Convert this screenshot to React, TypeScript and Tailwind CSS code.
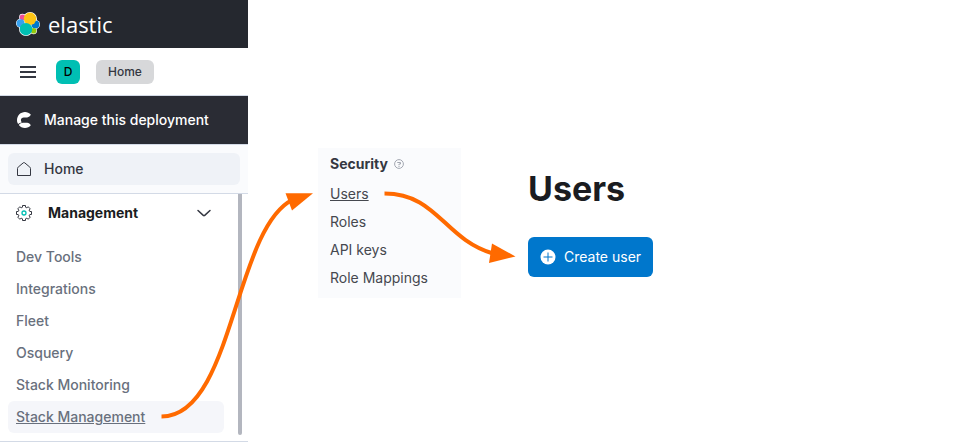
import React from "react";

const managementLinks = [
  "Dev Tools",
  "Integrations",
  "Fleet",
  "Osquery",
  "Stack Monitoring",
  "Stack Management",
];

const securityLinks = ["Users", "Roles", "API keys", "Role Mappings"];

function ElasticLogo() {
  return (
    <svg className="size-6" viewBox="0 0 24 24" aria-hidden="true">
      <circle cx="6.500" cy="5.200" r="3.400" fill="#fff" />
      <circle cx="4.600" cy="11.300" r="4.600" fill="#fff" />
      <circle cx="19.400" cy="12.600" r="4.600" fill="#fff" />
      <circle cx="17.600" cy="18.800" r="3.400" fill="#fff" />
      <circle cx="14" cy="7" r="7" fill="#fff" />
      <circle cx="10" cy="17" r="7" fill="#fff" />
      <circle cx="6.500" cy="5.200" r="2.800" fill="#f04e98" />
      <circle cx="4.600" cy="11.300" r="4" fill="#36a2ef" />
      <circle cx="19.400" cy="12.600" r="4" fill="#0077cc" />
      <circle cx="17.600" cy="18.800" r="2.800" fill="#93c90e" />
      <circle cx="14" cy="6.800" r="6.200" fill="#fec514" />
      <circle cx="10" cy="17.200" r="6.200" fill="#00bfb3" />
    </svg>
  );
}

function CloudLogo() {
  return (
    <svg className="size-4" viewBox="0 0 16 16" fill="#fff" aria-hidden="true">
      <path d="M14.800 2.600C13.300.9 11.200 0 9 0 4.600 0 1 3.600 1 8c0 1.600.4 2.800 1.100 4 1-.9 2.300-1.500 3.700-1.600C5.200 9.700 4.900 9 4.900 8.100c0-1.600 1.200-2.700 2.900-2.700h3.400c1.600 0 3-1.100 3.600-2.800Z" />
      <path d="M2.800 13.100C4.200 14.900 6.400 16 9 16c2.300 0 4.400-1 5.800-2.700-.7-1.700-2-2.600-3.600-2.600H7c-1.600 0-3.100.8-4.200 2.400Z" />
    </svg>
  );
}

function HomeIcon() {
  return (
    <svg className="size-4" viewBox="0 0 16 16" fill="none" stroke="#343741" aria-hidden="true">
      <path d="M1.500 7.500c0-.6.200-1 .7-1.400L7.300 1.800c.5-.4.900-.4 1.400 0l5.100 4.300c.5.400.7.800.7 1.400v7h-13z" strokeLinejoin="round" />
    </svg>
  );
}

function GearIcon() {
  return (
    <svg className="size-4" viewBox="0 0 16 16" fill="none" aria-hidden="true">
      <path
        d="M6.500.5h3v1.700l1.400.7 1.200-1.200 2.200 2.200-1.200 1.200.7 1.400h1.700v3h-1.700l-.7 1.400 1.200 1.200-2.200 2.200-1.200-1.200-1.400.7v1.700h-3v-1.700l-1.400-.7-1.200 1.200-2.200-2.200 1.200-1.200-.7-1.400H.5v-3h1.700l.7-1.400-1.200-1.200 2.200-2.200 1.200 1.200 1.400-.7z"
        stroke="#343741"
        strokeLinejoin="round"
      />
      <circle cx="8" cy="8" r="2" stroke="#00bfb3" strokeWidth="1.300" />
    </svg>
  );
}

function FlowArrows() {
  return (
    <svg
      className="pointer-events-none absolute top-0 left-0"
      width="540"
      height="445"
      viewBox="0 0 540 445"
      fill="none"
      aria-hidden="true"
    >
      <g stroke="#ff6a00" strokeWidth="4">
        <path d="M161.500 416.500C233 416.500 234 230 292 200" />
        <path d="M384.500 193.500C437 193.500 444 239 493 253.500" />
      </g>
      <g fill="#ff6a00">
        <path d="M285.500 193.300 313 193.300 292 210.500Z" />
        <path d="M492 243.500 515.500 256.500 489 263Z" />
      </g>
    </svg>
  );
}

function Sidebar() {
  return (
    <aside className="flex w-[248px] shrink-0 flex-col border-b border-[#d3dae6]">
      <div className="flex h-12 items-center gap-2 bg-[#25282f] px-4">
        <ElasticLogo />
        <span className="font-['Open_Sans','Noto_Sans',sans-serif] text-[22px] leading-6 text-white">
          elastic
        </span>
      </div>

      <div className="flex h-12 items-center gap-4 border-b border-[#d3dae6] px-4">
        <button type="button" aria-label="Toggle navigation" className="flex w-6 flex-col items-center gap-[3px]">
          <span className="h-0.5 w-4 bg-[#343741]" />
          <span className="h-0.5 w-4 bg-[#343741]" />
          <span className="h-0.5 w-4 bg-[#343741]" />
        </button>
        <button type="button" className="size-6 rounded-md bg-[#00bfb3] text-xs font-medium text-black">
          D
        </button>
        <a href="#home" className="flex h-6 items-center rounded-md bg-[#d7d8da] px-3 text-xs font-medium">
          Home
        </a>
      </div>

      <a href="#deployment" className="flex h-12 items-center gap-3 bg-[#2a2c34] px-4 font-medium text-white">
        <CloudLogo />
        Manage this deployment
      </a>

      <nav aria-label="Main">
        <div className="border-y border-[#d3dae6] bg-[#fafbfd] p-2">
          <a href="#home" className="flex h-8 items-center gap-3 rounded-md bg-[#eff2f7] px-2 font-medium">
            <HomeIcon />
            Home
          </a>
        </div>
        <div className="flex justify-between pr-[6px]">
          <div className="w-[224px] pb-2 pl-2">
            <button
              type="button"
              aria-expanded="true"
              className="flex h-[38px] w-full items-center gap-4 pr-3 pl-2 text-left font-bold text-[#1a1c21]"
            >
              <GearIcon />
              <span className="flex-1">Management</span>
              <svg className="size-4" viewBox="0 0 16 16" fill="none" stroke="#343741" strokeWidth="1.500" aria-hidden="true">
                <path d="m2 5.500 5.300 4.900c.5.400.9.400 1.400 0L14 5.500" strokeLinecap="round" strokeLinejoin="round" />
              </svg>
            </button>
            <ul className="pt-[9px]">
              {managementLinks.map((label) => (
                <li key={label}>
                  <a
                    href="#management"
                    className={
                      label === "Stack Management"
                        ? "flex h-8 items-center rounded-md bg-[#f5f6fa] px-2 font-medium text-[#69707d] underline"
                        : "flex h-8 items-center px-2 font-medium text-[#69707d]"
                    }
                  >
                    {label}
                  </a>
                </li>
              ))}
            </ul>
          </div>
          <div className="mb-[6px] w-1 rounded-b-sm bg-[#b3b6bf]" />
        </div>
      </nav>
    </aside>
  );
}

function SecurityMenu() {
  return (
    <nav aria-label="Security" className="mt-[148px] ml-[70px] w-[143px] shrink-0 bg-[#fafbfd] px-3 py-[6px]">
      <h2 className="flex h-5 items-center gap-[6px] font-bold">
        Security
        <svg className="size-[10px]" viewBox="0 0 10 10" fill="none" stroke="#a3a7b1" aria-hidden="true">
          <circle cx="5" cy="5" r="4.400" />
          <path d="M3.500 4V3.500h3V5H5v1.300M5 7v1" />
        </svg>
      </h2>
      <ul className="pt-[6px]">
        {securityLinks.map((label) => (
          <li key={label} className="flex h-7 items-center text-[#45484f]">
            <a href="#security" className={label === "Users" ? "underline" : ""}>
              {label}
            </a>
          </li>
        ))}
      </ul>
    </nav>
  );
}

export default function App() {
  return (
    <div className="relative flex items-start bg-white font-['Inter','Liberation_Sans',sans-serif] text-sm text-[#343741]">
      <Sidebar />
      <SecurityMenu />
      <main className="mt-[169px] ml-[67px]">
        <h1 className="text-[34px] leading-10 font-bold text-[#1a1c21]">Users</h1>
        <button
          type="button"
          className="mt-7 flex h-10 items-center gap-2 rounded-md bg-[#0077cc] px-3 text-white"
        >
          <svg className="size-4" viewBox="0 0 16 16" aria-hidden="true">
            <circle cx="8" cy="8" r="7.500" fill="#fff" />
            <path d="M8 3.500v9M3.500 8h9" stroke="#0077cc" />
          </svg>
          Create user
        </button>
      </main>
      <FlowArrows />
    </div>
  );
}
